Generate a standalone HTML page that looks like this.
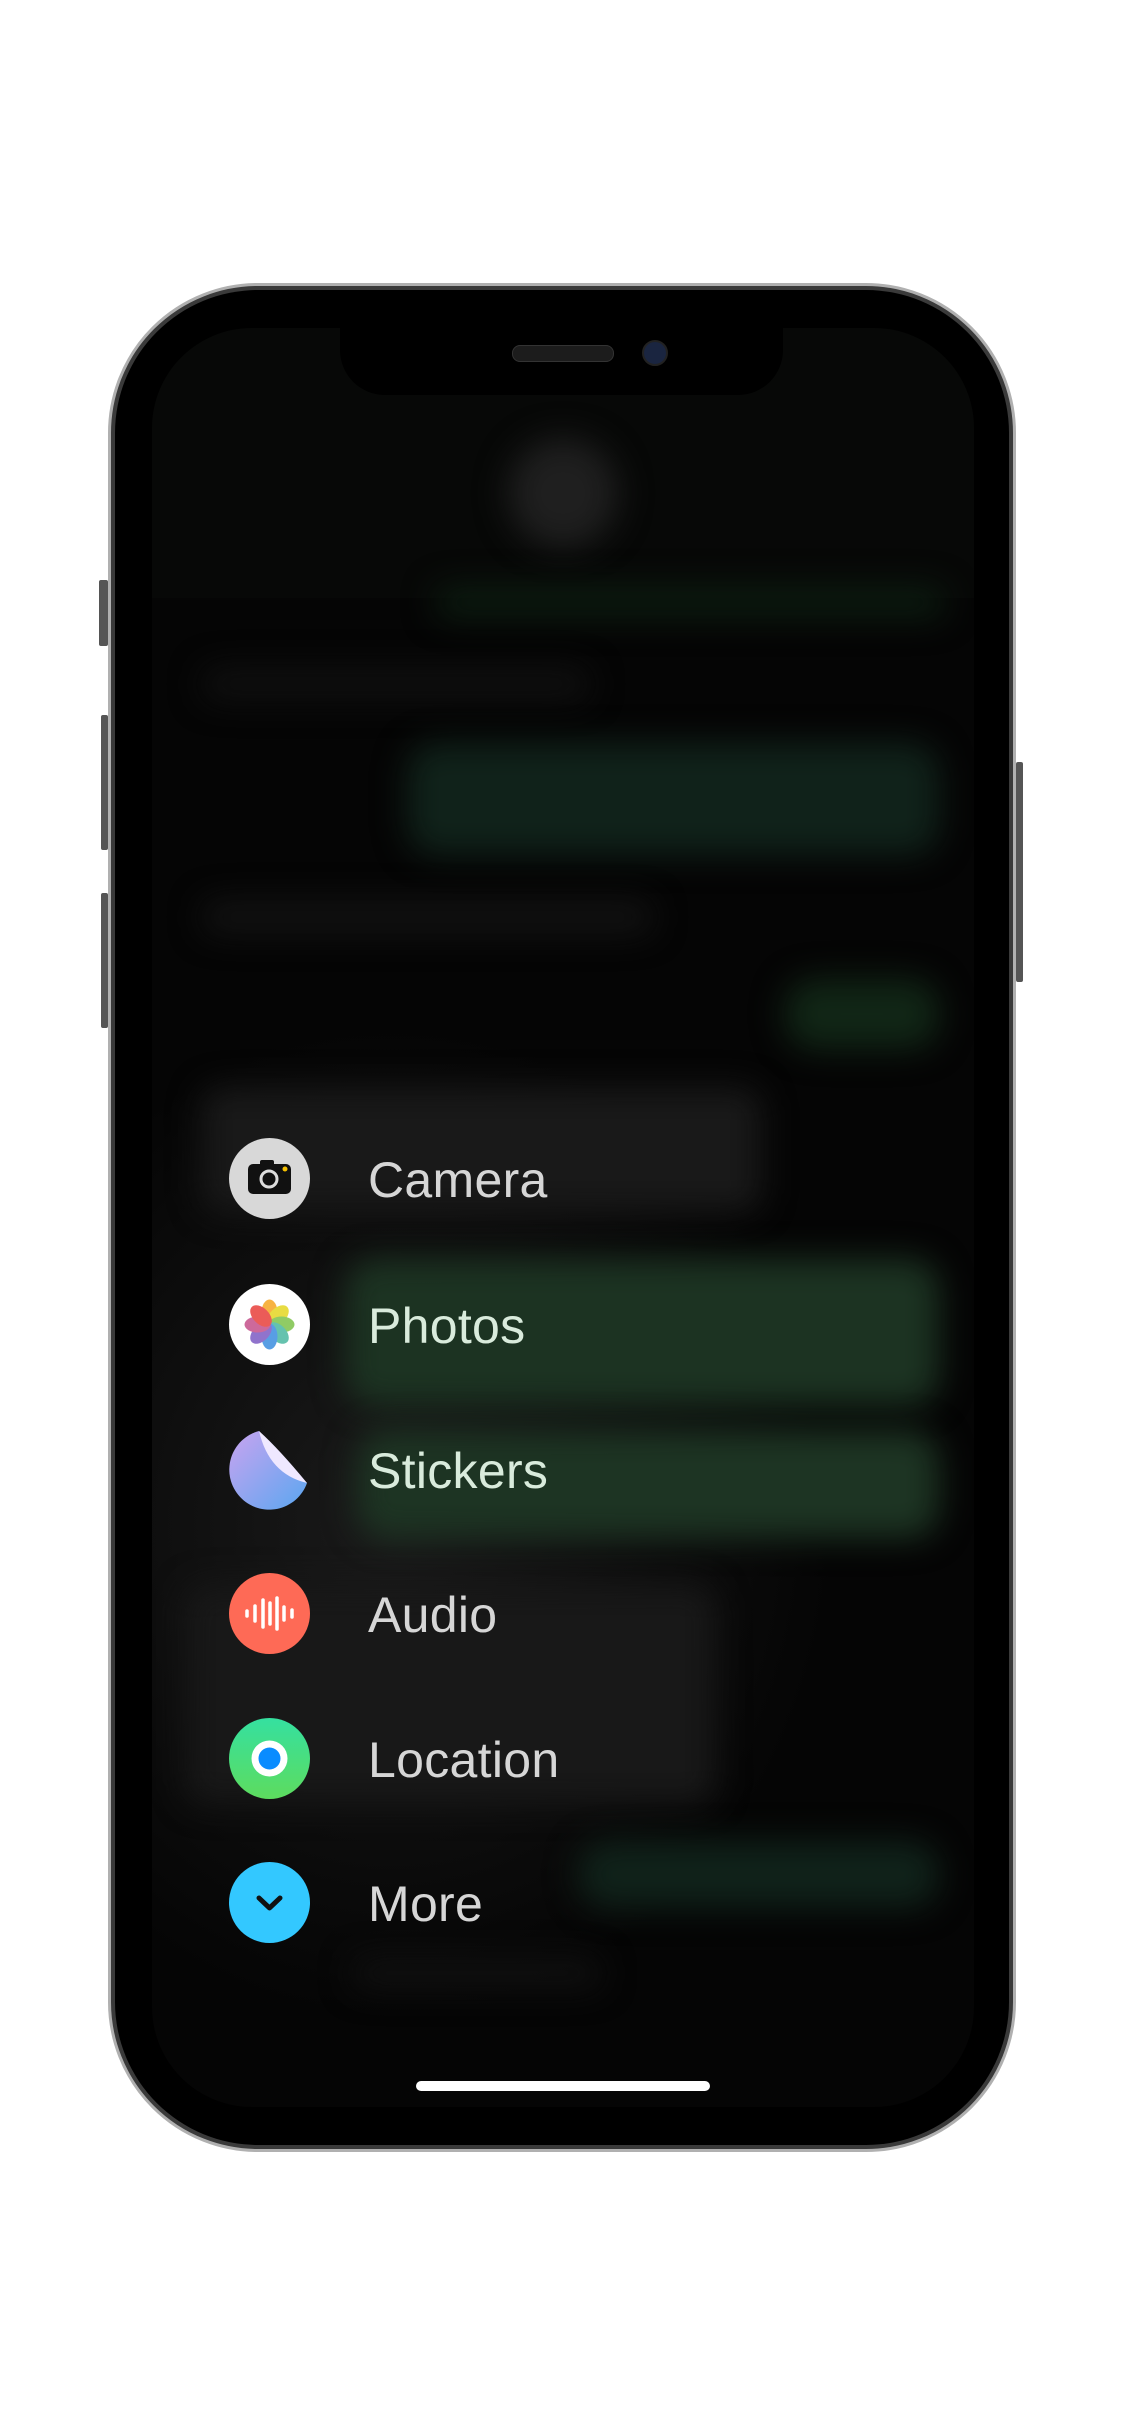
<!DOCTYPE html>
<html><head><meta charset="utf-8"><style>
html,body{margin:0;padding:0;background:#fff;}
body{width:1125px;height:2436px;position:relative;overflow:hidden;font-family:"Liberation Sans",sans-serif;}
.frame{position:absolute;left:108px;top:283px;width:908px;height:1869px;border-radius:150px;background:#3a3a3a;border:3px solid #b0b0b0;box-sizing:border-box;}
.frame2{position:absolute;left:115px;top:290px;width:894px;height:1855px;border-radius:143px;background:#000;}
.btn{position:absolute;background:#555;border-radius:2px;}
.screen{position:absolute;left:152px;top:328px;width:822px;height:1779px;border-radius:100px;background:#050505;overflow:hidden;}
.b{position:absolute;filter:blur(16px);}
.g{border-radius:30px;}
.gr{border-radius:20px;}
.notch{position:absolute;left:340px;top:320px;width:443px;height:75px;background:#000;border-radius:0 0 45px 45px;}
.row{position:absolute;left:229px;width:600px;height:81px;}
.ic{position:absolute;left:0;top:0;width:81px;height:81px;border-radius:50%;}
.lb{position:absolute;left:139px;top:13px;font-size:50px;color:#d6d6d6;letter-spacing:0.3px;}
</style></head><body>
<div class="btn" style="left:99px;top:580px;width:9px;height:66px"></div>
<div class="btn" style="left:101px;top:715px;width:7px;height:135px"></div>
<div class="btn" style="left:101px;top:893px;width:7px;height:135px"></div>
<div class="btn" style="left:1016px;top:762px;width:7px;height:220px"></div>
<div class="frame"></div>
<div class="frame2"></div>
<div class="screen">
  <div style="position:absolute;left:0;top:0;width:822px;height:270px;background:#070807"></div>
  <div style="position:absolute;left:-200px;top:700px;width:1100px;height:1100px;background:radial-gradient(ellipse closest-side at 40% 45%,#1a1a1a,rgba(5,5,5,0))"></div>
  <div class="b" style="left:356px;top:110px;width:110px;height:110px;border-radius:50%;background:#1f1f1f"></div>
  <div class="b g" style="left:283px;top:259px;width:510px;height:31px;background:#0c1c10"></div>
  <div class="b gr" style="left:50px;top:340px;width:388px;height:32px;background:#101010"></div>
  <div class="b g" style="left:255px;top:415px;width:532px;height:112px;background:#10221a"></div>
  <div class="b gr" style="left:50px;top:573px;width:451px;height:32px;background:#131313"></div>
  <div class="b g" style="left:633px;top:651px;width:154px;height:70px;background:#112616"></div>
  <div class="b gr" style="left:50px;top:760px;width:559px;height:124px;background:#191919"></div>
  <div class="b g" style="left:193px;top:931px;width:594px;height:147px;background:#1c3322"></div>
  <div class="b g" style="left:205px;top:1102px;width:582px;height:108px;background:#1d3423"></div>
  <div class="b gr" style="left:34px;top:1257px;width:529px;height:218px;background:#181818"></div>
  <div class="b g" style="left:426px;top:1513px;width:361px;height:67px;background:#10221a"></div>
  <div class="b gr" style="left:200px;top:1630px;width:250px;height:30px;background:#101010"></div>
  <div style="position:absolute;left:264px;top:1753px;width:294px;height:10px;border-radius:5px;background:#fff"></div>
</div>
<div class="notch"></div>
<div style="position:absolute;left:512px;top:345px;width:100px;height:15px;border-radius:8px;background:#1c1c1c;border:1px solid #333"></div>
<div style="position:absolute;left:642px;top:340px;width:22px;height:22px;border-radius:50%;background:#1a2540;border:2px solid #222"></div>

<div class="row" style="top:1138px"><div class="ic" style="background:#d8d8d8"><svg width="81" height="81" viewBox="0 0 81 81"><rect x="19" y="26" width="43" height="30" rx="5" fill="#111"/><rect x="31" y="22" width="14" height="6" rx="2" fill="#111"/><circle cx="40" cy="41" r="8" fill="#111" stroke="#ddd" stroke-width="3"/><circle cx="56" cy="31" r="2.5" fill="#f5c000"/></svg></div><div class="lb">Camera</div></div>
<div class="row" style="top:1284px"><div class="ic" style="background:#fff"><svg width="81" height="81" viewBox="0 0 81 81"><g transform="translate(40.5 40.5)" opacity="0.85">
<ellipse rx="8" ry="13" cy="-12" fill="#f6a623" transform="rotate(0)"/>
<ellipse rx="8" ry="13" cy="-12" fill="#e5d723" transform="rotate(45)"/>
<ellipse rx="8" ry="13" cy="-12" fill="#7dc24b" transform="rotate(90)"/>
<ellipse rx="8" ry="13" cy="-12" fill="#4bb8a0" transform="rotate(135)"/>
<ellipse rx="8" ry="13" cy="-12" fill="#3c8ee0" transform="rotate(180)"/>
<ellipse rx="8" ry="13" cy="-12" fill="#7d5bc4" transform="rotate(225)"/>
<ellipse rx="8" ry="13" cy="-12" fill="#c5508a" transform="rotate(270)"/>
<ellipse rx="8" ry="13" cy="-12" fill="#e8403c" transform="rotate(315)"/></g></svg></div><div class="lb" style="color:#d9ebdc">Photos</div></div>
<div class="row" style="top:1429px"><div class="ic"><svg width="81" height="81" viewBox="0 0 81 81"><defs><linearGradient id="s" x1="0" y1="0" x2="1" y2="1"><stop offset="0" stop-color="#c9a4f0"/><stop offset="1" stop-color="#5aa6f0"/></linearGradient></defs><path d="M30 2 L78 54 A40 40 0 1 1 30 2 Z" fill="url(#s)"/><path d="M30 2 Q40 45 78 54 Q50 20 30 2Z" fill="#efe8ff"/></svg></div><div class="lb" style="color:#d9ebdc">Stickers</div></div>
<div class="row" style="top:1573px"><div class="ic" style="background:#fe6a56"><svg width="81" height="81" viewBox="0 0 81 81" stroke="#fff" stroke-linecap="round" stroke-width="3.5"><line x1="18" y1="38" x2="18" y2="43"/><line x1="26" y1="33" x2="26" y2="48"/><line x1="34" y1="27" x2="34" y2="54"/><line x1="41" y1="30" x2="41" y2="51"/><line x1="48" y1="25" x2="48" y2="56"/><line x1="55" y1="34" x2="55" y2="47"/><line x1="63" y1="37" x2="63" y2="44"/></svg></div><div class="lb">Audio</div></div>
<div class="row" style="top:1718px"><div class="ic" style="background:linear-gradient(#35e0a0,#5ddc5e)"><svg width="81" height="81" viewBox="0 0 81 81"><circle cx="40.5" cy="40.5" r="18" fill="#fff"/><circle cx="40.5" cy="40.5" r="11" fill="#0a8cff"/></svg></div><div class="lb">Location</div></div>
<div class="row" style="top:1862px"><div class="ic" style="background:#33c8ff"><svg width="81" height="81" viewBox="0 0 81 81"><path d="M30 36 L40.5 46 L51 36" fill="none" stroke="#111" stroke-width="5" stroke-linecap="round" stroke-linejoin="round"/></svg></div><div class="lb">More</div></div>
</body></html>
